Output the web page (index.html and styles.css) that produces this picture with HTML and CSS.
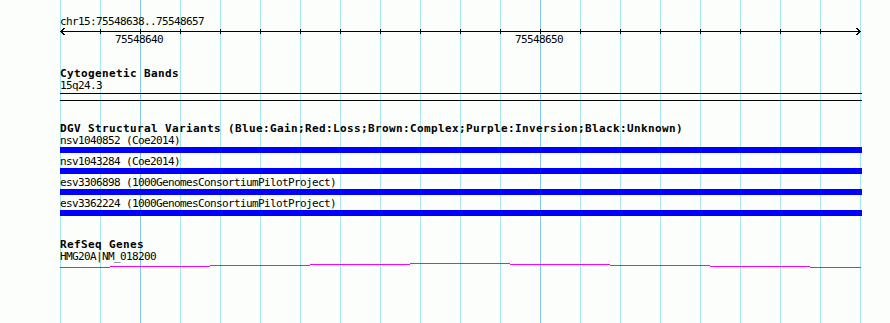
FILE: index.html
```html
<!DOCTYPE html>
<html lang="en">
<head>
<meta charset="utf-8">
<title>Genome Browser</title>
<link rel="stylesheet" href="styles.css">
</head>
<body>
<div class="page">
  <section class="track ruler-track">
    <div class="line">chr15:75548638..75548657</div>
    <svg class="ruler" width="802" height="7" viewBox="0 0 802 7">
      <rect x="0" y="4" width="801" height="1" fill="#000"/>
      <g fill="#000">
        <rect x="40" y="2" width="1" height="5"/>
        <rect x="80" y="2" width="1" height="5"/>
        <rect x="120" y="2" width="1" height="5"/>
        <rect x="160" y="2" width="1" height="5"/>
        <rect x="200" y="2" width="1" height="5"/>
        <rect x="240" y="2" width="1" height="5"/>
        <rect x="280" y="2" width="1" height="5"/>
        <rect x="320" y="2" width="1" height="5"/>
        <rect x="360" y="2" width="1" height="5"/>
        <rect x="400" y="2" width="1" height="5"/>
        <rect x="440" y="2" width="1" height="5"/>
        <rect x="480" y="2" width="1" height="5"/>
        <rect x="520" y="2" width="1" height="5"/>
        <rect x="560" y="2" width="1" height="5"/>
        <rect x="600" y="2" width="1" height="5"/>
        <rect x="640" y="2" width="1" height="5"/>
        <rect x="680" y="2" width="1" height="5"/>
        <rect x="720" y="2" width="1" height="5"/>
        <rect x="760" y="2" width="1" height="5"/>
      </g>
      <polyline points="4.5,1 1,4.5 4.5,8" fill="none" stroke="#000" stroke-width="1"/>
      <polyline points="796.5,1 800,4.5 796.5,8" fill="none" stroke="#000" stroke-width="1"/>
    </svg>
    <div class="line ruler-labels"><span>75548640</span><span>75548650</span></div>
  </section>

  <section class="track cyto">
    <div class="title">Cytogenetic Bands</div>
    <div class="line">15q24.3</div>
    <div class="band"></div>
  </section>

  <section class="track dgv">
    <div class="title">DGV Structural Variants (Blue:Gain;Red:Loss;Brown:Complex;Purple:Inversion;Black:Unknown)</div>
    <div class="item"><div class="line">nsv1040852 (Coe2014)</div><div class="bar"></div></div>
    <div class="item"><div class="line">nsv1043284 (Coe2014)</div><div class="bar"></div></div>
    <div class="item"><div class="line">esv3306898 (1000GenomesConsortiumPilotProject)</div><div class="bar"></div></div>
    <div class="item"><div class="line">esv3362224 (1000GenomesConsortiumPilotProject)</div><div class="bar"></div></div>
  </section>

  <section class="track refseq">
    <div class="title">RefSeq Genes</div>
    <div class="line">HMG20A|NM_018200</div>
    <svg class="gene" width="802" height="5" viewBox="0 0 802 5">
      <g fill="#ff00ff">
        <rect x="0" y="4" width="50" height="1"/>
        <rect x="50" y="3" width="100" height="1"/>
        <rect x="150" y="2" width="100" height="1"/>
        <rect x="250" y="1" width="100" height="1"/>
        <rect x="350" y="0" width="100" height="1"/>
        <rect x="450" y="1" width="100" height="1"/>
        <rect x="550" y="2" width="100" height="1"/>
        <rect x="650" y="3" width="100" height="1"/>
        <rect x="750" y="4" width="51" height="1"/>
      </g>
    </svg>
  </section>
</div>
</body>
</html>
```

FILE: styles.css
```css
html, body {
  margin: 0;
  padding: 0;
  background: #fbfefb;
}

.page {
  width: 890px;
  height: 323px;
  box-sizing: border-box;
  padding: 16px 0 0 60px;
  overflow: hidden;
  background-color: #fbfefb;
  background-image:
    linear-gradient(#7fc9ef, #7fc9ef),
    linear-gradient(#7fc9ef, #7fc9ef),
    repeating-linear-gradient(to right, #a6e6ef 0 1px, transparent 1px 40px);
  background-size: 1px 100%, 1px 100%, 801px 100%;
  background-position: 140px 0, 540px 0, 60px 0;
  background-repeat: no-repeat;
  font-family: "DejaVu Sans Mono", monospace;
  font-size: 11px;
  line-height: 12px;
  color: #000;
}

.track {
  display: flex;
  flex-direction: column;
  width: 802px;
}

.line {
  height: 12px;
  letter-spacing: -0.622px;
  white-space: nowrap;
}

.title {
  height: 12px;
  font-weight: bold;
  letter-spacing: 0.378px;
  white-space: nowrap;
}

.ruler {
  display: block;
  overflow: visible;
  margin-top: -1px;
  shape-rendering: crispEdges;
}

.ruler-labels {
  display: flex;
  gap: 352px;
  padding-left: 55px;
}

.cyto {
  margin-top: 22px;
}

.band {
  margin-top: 1px;
  height: 6px;
  border-top: 1px solid #000;
  border-bottom: 1px solid #000;
}

.dgv {
  margin-top: 22px;
}

.item {
  display: flex;
  flex-direction: column;
}

.item + .item {
  margin-top: 3px;
}

.bar {
  height: 6px;
  background: #0000ff;
}

.refseq {
  margin-top: 23px;
}

.gene {
  display: block;
  shape-rendering: crispEdges;
}
```
